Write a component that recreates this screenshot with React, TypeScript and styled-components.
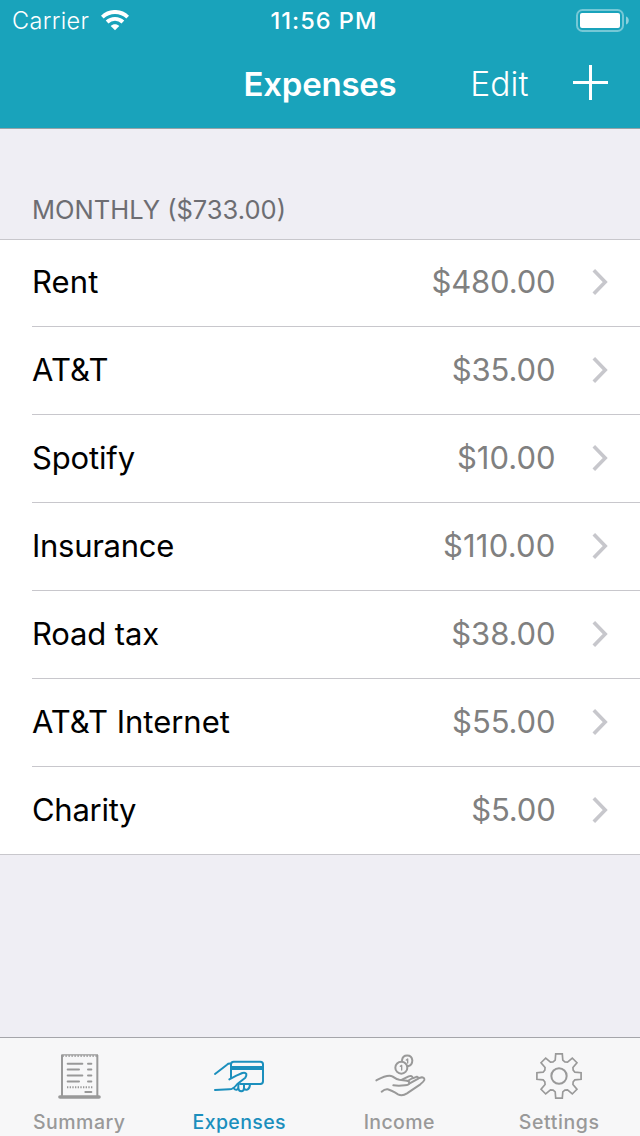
import React from "react";
import styled, { createGlobalStyle } from "styled-components";

const GlobalStyle = createGlobalStyle`
  * { box-sizing: border-box; }
  body { margin: 0; background: #efeef4; font-family: Inter, "Liberation Sans", sans-serif; }
`;

const Screen = styled.main`
  display: flex;
  flex-direction: column;
  width: 640px;
  height: 1136px;
  background: #efeef4;
  overflow: hidden;
  white-space: nowrap;
`;

const Header = styled.header`
  height: 129px;
  background: #19a3bb;
  border-bottom: 1px solid #95a3a8;
  color: #fff;
`;

const StatusBar = styled.div`
  display: grid;
  grid-template-columns: 1fr auto 1fr;
  align-items: center;
  height: 40px;
  padding: 0 11px 0 12px;
`;

const Carrier = styled.div`
  display: flex;
  align-items: center;
  gap: 12px;
  font-size: 23.5px;
  font-weight: 320;
  letter-spacing: 0.35px;
  line-height: 42px;
`;

const Clock = styled.time`
  font-size: 23.5px;
  font-weight: 550;
  letter-spacing: 1px;
  line-height: 42px;
  padding-left: 7px;
`;

const WifiIcon = styled.svg`
  margin-bottom: 2px;
`;

const BatteryIcon = styled.svg`
  justify-self: end;
  margin-bottom: 1px;
`;

const NavBar = styled.nav`
  display: grid;
  grid-template-columns: 1fr auto 1fr;
  align-items: center;
  height: 88px;
`;

const Title = styled.h1`
  grid-column: 2;
  margin: 0;
  font-size: 33px;
  font-weight: 600;
  letter-spacing: -0.25px;
  line-height: 88px;
`;

const Actions = styled.div`
  display: flex;
  justify-content: flex-end;
  align-items: center;
  gap: 44.5px;
  padding-right: 32px;
`;

const TextAction = styled.span`
  font-size: 33.5px;
  font-weight: 320;
  letter-spacing: 0.1px;
  line-height: 88px;
`;

const AddIcon = styled.svg`
  margin-top: -4px;
`;

const SectionTitle = styled.h2`
  margin: 0;
  height: 110px;
  padding: 65px 32px 0;
  font-size: 25.5px;
  font-weight: 380;
  line-height: 32px;
  color: #6d6d72;
`;

const List = styled.ul`
  margin: 0;
  padding: 0 0 0 32px;
  list-style: none;
  background: #fff;
  border: solid #c8c7cc;
  border-width: 1px 0;
`;

const Row = styled.li`
  display: flex;
  align-items: center;
  height: 88px;
  padding: 0 32.5px 2px 0;
  font-size: 31px;
  line-height: 84px;
  border-bottom: 1px solid #c8c7cc;
  &:first-child { height: 87px; }
  &:last-child { height: 87px; padding-bottom: 1px; border-bottom: 0; }
`;

const Name = styled.span<{ $tracking: number }>`
  flex: 1;
  color: #000;
  letter-spacing: ${(p) => p.$tracking}px;
`;

const Amount = styled.span<{ $tracking: number }>`
  color: #808080;
  margin-right: 36px;
  font-weight: 380;
  letter-spacing: ${(p) => p.$tracking}px;
`;

const TabBar = styled.footer`
  display: grid;
  grid-template-columns: repeat(4, 1fr);
  height: 99px;
  margin-top: auto;
  background: #f7f7f8;
  border-top: 1px solid #a5a5aa;
`;

const Tab = styled.div<{ $active?: boolean }>`
  display: flex;
  flex-direction: column;
  align-items: center;
  padding-top: 12px;
  color: ${(p) => (p.$active ? "#1b8fbd" : "#999")};
`;

const TabLabel = styled.span<{ $tracking: number }>`
  margin: 8px 1.5px 0 0;
  font-size: 19.5px;
  font-weight: 500;
  line-height: 24px;
  letter-spacing: ${(p) => p.$tracking}px;
`;

const TabIcon = styled.svg.attrs({ viewBox: "96 60 168 156", width: 56, height: 52 })`
  fill: none;
  stroke: currentColor;
  stroke-width: 6;
  stroke-linecap: round;
  stroke-linejoin: round;
`;

const expenses = [
  { name: "Rent", amount: "$480.00", nt: 0.1, at: -0.15 },
  { name: "AT&T", amount: "$35.00", nt: 0.2, at: -0.1 },
  { name: "Spotify", amount: "$10.00", nt: -0.15, at: 0 },
  { name: "Insurance", amount: "$110.00", nt: -0.28, at: 0.2 },
  { name: "Road tax", amount: "$38.00", nt: -0.15, at: -0.1 },
  { name: "AT&T Internet", amount: "$55.00", nt: 0, at: -0.1 },
  { name: "Charity", amount: "$5.00", nt: -0.28, at: -0.2 },
];

const Wifi = () => (
  <WifiIcon width="28" height="21" viewBox="0 0 28 21" fill="none" stroke="#fff" strokeWidth="3.9">
    <path d="M1.3 7.1 C8.3 .2 19.7 .2 26.7 7.1" />
    <path d="M6.1 12 C10.5 7.8 17.5 7.8 21.9 12" />
    <path d="M14 20.3 L9.7 16 C12.1 13.7 15.9 13.7 18.3 16 Z" fill="#fff" stroke="none" />
  </WifiIcon>
);

const Battery = () => (
  <BatteryIcon width="53" height="23" viewBox="0 0 53 23">
    <rect x="1" y="1" width="46" height="21" rx="5.5" fill="none" stroke="#fff" strokeOpacity=".4" strokeWidth="2" />
    <rect x="4" y="4" width="40" height="15" rx="2" fill="#fff" />
    <path d="M50 7.5 C53.7 8.5 53.7 14.5 50 15.5 Z" fill="#fff" fillOpacity=".5" />
  </BatteryIcon>
);

const Chevron = () => (
  <svg width="16" height="28" viewBox="0 0 16 28" fill="none" stroke="#c7c7cc" strokeWidth="3.6">
    <path d="M1.8 2.3 L13.2 14 L1.8 25.7" />
  </svg>
);

const SummaryIcon = () => (
  <TabIcon>
    <path d="M126 198 V75 M232 198 V75" strokeLinecap="butt" />
    <path d="M124 74.5 H234" strokeWidth="4" strokeLinecap="butt" />
    <path d="M127 78 H233" strokeWidth="4" strokeDasharray="5 4" strokeLinecap="butt" />
    <path d="M120 201 H237" strokeWidth="11" />
    <path d="M143 101 H187 M143 118.5 H177 M143 136.5 H187 M143 154.5 H177 M204 101 H214 M204 118.5 H214 M204 136.5 H214 M204 154.5 H214 M196 186 H214" />
    <path d="M141 171.5 H217" strokeDasharray="4 4" strokeLinecap="butt" />
  </TabIcon>
);

const ExpensesIcon = () => (
  <TabIcon>
    <path d="M105 132 L141 104 Q145 100 153 101" />
    <path d="M153 144 V103 Q153 95 161 95 H241 Q249 95 249 103 V154 Q249 162 241 162 H180" />
    <path d="M153 114 H249" strokeWidth="12" strokeLinecap="butt" />
    <path d="M148 148 L169 137 L187 129 Q196 126 199 132 Q200 137 196 143 L172 162 Q160 178 148 178 L105 180" />
    <path d="M161 174 Q163 180 170 179 Q175 178 175 170 M175 163 V174 Q176 184 184 184 Q192 183 192 174 V163 M192 176 Q196 181 202 179 Q209 176 210 163" />
  </TabIcon>
);

const IncomeIcon = () => (
  <TabIcon>
    <circle cx="184" cy="113" r="18" />
    <path d="M186 91 C188 72 215 72 217 91 C217 102 211 108 203 109" />
    <path d="M181 109 L185 106 V120 M199 90 L203 87 V99" strokeWidth="4" />
    <path d="M109 151 C124 143 143 132 157 139 Q168 147 178 149 L201 152 Q209 154 208 160 Q206 165 195 166 Q176 168 160 166" />
    <path d="M186 149 L206 139 Q217 135 218 144 L203 153 M218 145 L231 140 Q235 141 235 146 L209 160 M235 145 L246 142 Q254 143 253 150 Q251 155 241 163 L201 190 Q187 199 174 193 Q154 181 143 178 Q134 177 125 185" />
  </TabIcon>
);

const gearPath = (() => {
  const points: string[] = [];
  const profile: [number, number][] = [[-22.5, 46], [-13.5, 49], [-8.5, 67], [8.5, 67], [13.5, 49]];
  for (let tooth = 0; tooth < 8; tooth++) {
    for (const [offset, radius] of profile) {
      const angle = ((tooth * 45 + offset) * Math.PI) / 180;
      points.push(`${(177 + radius * Math.sin(angle)).toFixed(1)} ${(138 - radius * Math.cos(angle)).toFixed(1)}`);
    }
  }
  return `M${points.join(" L")} Z`;
})();

const SettingsIcon = () => (
  <TabIcon>
    <circle cx="177" cy="138" r="23" />
    <path d={gearPath} strokeWidth="5" strokeLinejoin="miter" />
  </TabIcon>
);

export default function App() {
  return (
    <>
      <GlobalStyle />
      <Screen>
        <Header>
          <StatusBar>
            <Carrier>Carrier<Wifi /></Carrier>
            <Clock>11:56 PM</Clock>
            <Battery />
          </StatusBar>
          <NavBar>
            <Title>Expenses</Title>
            <Actions>
              <TextAction>Edit</TextAction>
              <AddIcon width="35" height="35" viewBox="0 0 35 35" stroke="#fff" strokeWidth="3">
                <path d="M0 17.5 H35 M17.5 0 V35" />
              </AddIcon>
            </Actions>
          </NavBar>
        </Header>
        <SectionTitle>MONTHLY ($733.00)</SectionTitle>
        <List>
          {expenses.map((e) => (
            <Row key={e.name}>
              <Name $tracking={e.nt}>{e.name}</Name>
              <Amount $tracking={e.at}>{e.amount}</Amount>
              <Chevron />
            </Row>
          ))}
        </List>
        <TabBar>
          <Tab><SummaryIcon /><TabLabel $tracking={0.5}>Summary</TabLabel></Tab>
          <Tab $active><ExpensesIcon /><TabLabel $tracking={0.4}>Expenses</TabLabel></Tab>
          <Tab><IncomeIcon /><TabLabel $tracking={0.4}>Income</TabLabel></Tab>
          <Tab><SettingsIcon /><TabLabel $tracking={0.6}>Settings</TabLabel></Tab>
        </TabBar>
      </Screen>
    </>
  );
}
